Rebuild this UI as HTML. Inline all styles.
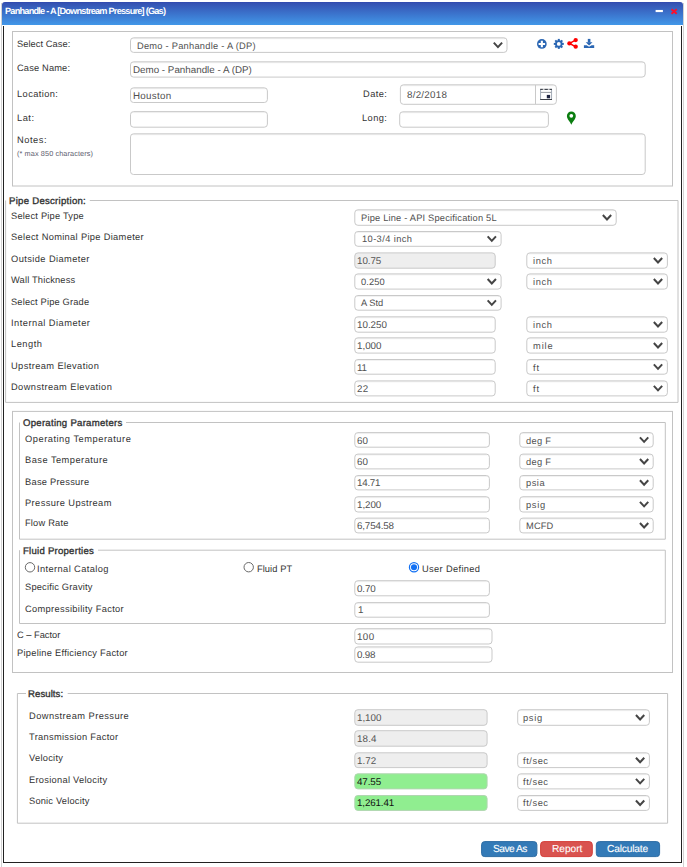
<!DOCTYPE html><html lang="en"><head><meta charset="utf-8"><title>Panhandle - A [Downstream Pressure] (Gas)</title><style>
html,body{margin:0;padding:0;background:#fff}
body{width:687px;height:867px;position:relative;overflow:hidden;font-family:'Liberation Sans', sans-serif;}
#r>div,#r>svg,#r>span{position:absolute;display:block;box-sizing:content-box}
#r>span{white-space:pre;line-height:14px;height:14px;transform:skewX(0.05deg);transform-origin:0 100%}
#r>span.lg{-webkit-text-stroke:0.35px #333}
#r>span.bt{-webkit-text-stroke:0.1px #fff}
</style></head><body><div id="r">
<svg style="left:0;top:0" width="687" height="867" viewBox="0 0 687 867">
<rect x="12.50" y="31.50" width="660.00" height="154.50" fill="none" stroke="#c2c2c2"/>
<rect x="130.50" y="37.80" width="376.50" height="14.60" rx="3.1" fill="#fff" stroke="#c9c9c9"/>
<path d="M132.50 38.80H505.00" stroke="#000" stroke-opacity=".05"/>
<path d="M493.80 42.60L497.95 47.09L502.10 42.60" fill="none" stroke="#454545" stroke-width="2.0"/>
<rect x="130.50" y="61.80" width="514.70" height="15.30" rx="3.1" fill="#fff" stroke="#c9c9c9"/>
<path d="M132.50 62.80H643.20" stroke="#000" stroke-opacity=".05"/>
<rect x="130.50" y="87.80" width="136.90" height="14.70" rx="3.1" fill="#fff" stroke="#c9c9c9"/>
<path d="M132.50 88.80H265.40" stroke="#000" stroke-opacity=".05"/>
<rect x="130.50" y="111.60" width="136.90" height="15.60" rx="3.1" fill="#fff" stroke="#c9c9c9"/>
<path d="M132.50 112.60H265.40" stroke="#000" stroke-opacity=".05"/>
<rect x="130.50" y="133.80" width="514.70" height="40.70" rx="3.1" fill="#fff" stroke="#c9c9c9"/>
<path d="M132.50 134.80H643.20" stroke="#000" stroke-opacity=".05"/>
<rect x="400.40" y="84.80" width="156.00" height="19.50" rx="3.1" fill="#fff" stroke="#c9c9c9"/>
<path d="M402.40 85.80H554.40" stroke="#000" stroke-opacity=".05"/>
<path d="M535.5 85V104" stroke="#c9c9c9"/>
<rect x="399.70" y="111.80" width="148.70" height="15.40" rx="3.1" fill="#fff" stroke="#c9c9c9"/>
<path d="M401.70 112.80H546.40" stroke="#000" stroke-opacity=".05"/>
<path d="M5.60 200.50H5.60V402.40H678.00V200.50H89.80" fill="none" stroke="#c2c2c2"/>
<rect x="354.80" y="209.80" width="261.40" height="15.50" rx="3.1" fill="#fff" stroke="#c9c9c9"/>
<path d="M356.80 210.80H614.20" stroke="#000" stroke-opacity=".05"/>
<path d="M602.85 215.05L607.00 219.54L611.15 215.05" fill="none" stroke="#454545" stroke-width="2.0"/>
<rect x="354.80" y="231.50" width="146.30" height="14.80" rx="3.1" fill="#fff" stroke="#c9c9c9"/>
<path d="M356.80 232.50H499.10" stroke="#000" stroke-opacity=".05"/>
<path d="M487.65 236.40L491.80 240.89L495.95 236.40" fill="none" stroke="#454545" stroke-width="2.0"/>
<rect x="354.80" y="252.90" width="140.40" height="15.30" rx="3.1" fill="#eeeeee" stroke="#c9c9c9"/>
<rect x="526.80" y="252.90" width="140.60" height="15.30" rx="3.1" fill="#fff" stroke="#c9c9c9"/>
<path d="M528.80 253.90H665.40" stroke="#000" stroke-opacity=".05"/>
<path d="M653.85 258.05L658.00 262.54L662.15 258.05" fill="none" stroke="#454545" stroke-width="2.0"/>
<rect x="354.80" y="273.90" width="146.30" height="15.20" rx="3.1" fill="#fff" stroke="#c9c9c9"/>
<path d="M356.80 274.90H499.10" stroke="#000" stroke-opacity=".05"/>
<path d="M487.65 279.00L491.80 283.49L495.95 279.00" fill="none" stroke="#454545" stroke-width="2.0"/>
<rect x="526.80" y="273.90" width="140.60" height="15.20" rx="3.1" fill="#fff" stroke="#c9c9c9"/>
<path d="M528.80 274.90H665.40" stroke="#000" stroke-opacity=".05"/>
<path d="M653.85 279.00L658.00 283.49L662.15 279.00" fill="none" stroke="#454545" stroke-width="2.0"/>
<rect x="354.80" y="295.50" width="146.30" height="14.70" rx="3.1" fill="#fff" stroke="#c9c9c9"/>
<path d="M356.80 296.50H499.10" stroke="#000" stroke-opacity=".05"/>
<path d="M487.65 300.35L491.80 304.84L495.95 300.35" fill="none" stroke="#454545" stroke-width="2.0"/>
<rect x="354.80" y="316.80" width="140.40" height="15.40" rx="3.1" fill="#fff" stroke="#c9c9c9"/>
<path d="M356.80 317.80H493.20" stroke="#000" stroke-opacity=".05"/>
<rect x="526.80" y="316.80" width="140.60" height="15.40" rx="3.1" fill="#fff" stroke="#c9c9c9"/>
<path d="M528.80 317.80H665.40" stroke="#000" stroke-opacity=".05"/>
<path d="M653.85 322.00L658.00 326.49L662.15 322.00" fill="none" stroke="#454545" stroke-width="2.0"/>
<rect x="354.80" y="337.80" width="140.40" height="15.30" rx="3.1" fill="#fff" stroke="#c9c9c9"/>
<path d="M356.80 338.80H493.20" stroke="#000" stroke-opacity=".05"/>
<rect x="526.80" y="337.80" width="140.60" height="15.30" rx="3.1" fill="#fff" stroke="#c9c9c9"/>
<path d="M528.80 338.80H665.40" stroke="#000" stroke-opacity=".05"/>
<path d="M653.85 342.95L658.00 347.44L662.15 342.95" fill="none" stroke="#454545" stroke-width="2.0"/>
<rect x="354.80" y="359.50" width="140.40" height="14.70" rx="3.1" fill="#fff" stroke="#c9c9c9"/>
<path d="M356.80 360.50H493.20" stroke="#000" stroke-opacity=".05"/>
<rect x="526.80" y="359.50" width="140.60" height="14.70" rx="3.1" fill="#fff" stroke="#c9c9c9"/>
<path d="M528.80 360.50H665.40" stroke="#000" stroke-opacity=".05"/>
<path d="M653.85 364.35L658.00 368.84L662.15 364.35" fill="none" stroke="#454545" stroke-width="2.0"/>
<rect x="354.80" y="380.90" width="140.40" height="15.00" rx="3.1" fill="#fff" stroke="#c9c9c9"/>
<path d="M356.80 381.90H493.20" stroke="#000" stroke-opacity=".05"/>
<rect x="526.80" y="380.90" width="140.60" height="15.00" rx="3.1" fill="#fff" stroke="#c9c9c9"/>
<path d="M528.80 381.90H665.40" stroke="#000" stroke-opacity=".05"/>
<path d="M653.85 385.90L658.00 390.39L662.15 385.90" fill="none" stroke="#454545" stroke-width="2.0"/>
<rect x="12.50" y="411.40" width="660.00" height="261.10" fill="none" stroke="#c2c2c2"/>
<path d="M19.50 422.50H19.50V539.20H665.30V422.50H126.00" fill="none" stroke="#c2c2c2"/>
<rect x="354.80" y="432.60" width="134.60" height="14.60" rx="3.1" fill="#fff" stroke="#c9c9c9"/>
<path d="M356.80 433.60H487.40" stroke="#000" stroke-opacity=".05"/>
<rect x="519.80" y="432.60" width="133.40" height="14.60" rx="3.1" fill="#fff" stroke="#c9c9c9"/>
<path d="M521.80 433.60H651.20" stroke="#000" stroke-opacity=".05"/>
<path d="M639.95 437.40L644.10 441.89L648.25 437.40" fill="none" stroke="#454545" stroke-width="2.0"/>
<rect x="354.80" y="454.10" width="134.60" height="14.80" rx="3.1" fill="#fff" stroke="#c9c9c9"/>
<path d="M356.80 455.10H487.40" stroke="#000" stroke-opacity=".05"/>
<rect x="519.80" y="454.10" width="133.40" height="14.80" rx="3.1" fill="#fff" stroke="#c9c9c9"/>
<path d="M521.80 455.10H651.20" stroke="#000" stroke-opacity=".05"/>
<path d="M639.95 459.00L644.10 463.49L648.25 459.00" fill="none" stroke="#454545" stroke-width="2.0"/>
<rect x="354.80" y="475.50" width="134.60" height="14.40" rx="3.1" fill="#fff" stroke="#c9c9c9"/>
<path d="M356.80 476.50H487.40" stroke="#000" stroke-opacity=".05"/>
<rect x="519.80" y="475.50" width="133.40" height="14.40" rx="3.1" fill="#fff" stroke="#c9c9c9"/>
<path d="M521.80 476.50H651.20" stroke="#000" stroke-opacity=".05"/>
<path d="M639.95 480.20L644.10 484.69L648.25 480.20" fill="none" stroke="#454545" stroke-width="2.0"/>
<rect x="354.80" y="496.70" width="134.60" height="15.30" rx="3.1" fill="#fff" stroke="#c9c9c9"/>
<path d="M356.80 497.70H487.40" stroke="#000" stroke-opacity=".05"/>
<rect x="519.80" y="496.70" width="133.40" height="15.30" rx="3.1" fill="#fff" stroke="#c9c9c9"/>
<path d="M521.80 497.70H651.20" stroke="#000" stroke-opacity=".05"/>
<path d="M639.95 501.85L644.10 506.34L648.25 501.85" fill="none" stroke="#454545" stroke-width="2.0"/>
<rect x="354.80" y="518.10" width="134.60" height="14.80" rx="3.1" fill="#fff" stroke="#c9c9c9"/>
<path d="M356.80 519.10H487.40" stroke="#000" stroke-opacity=".05"/>
<rect x="519.80" y="518.10" width="133.40" height="14.80" rx="3.1" fill="#fff" stroke="#c9c9c9"/>
<path d="M521.80 519.10H651.20" stroke="#000" stroke-opacity=".05"/>
<path d="M639.95 523.00L644.10 527.49L648.25 523.00" fill="none" stroke="#454545" stroke-width="2.0"/>
<path d="M19.50 550.20H19.50V623.50H665.30V550.20H98.00" fill="none" stroke="#c2c2c2"/>
<circle cx="30.0" cy="567.3" r="4.7" fill="#fff" stroke="#6a6a6a" stroke-width="1"/>
<circle cx="248.7" cy="567.2" r="4.7" fill="#fff" stroke="#6a6a6a" stroke-width="1"/>
<circle cx="414" cy="567.3" r="4.6" fill="#fff" stroke="#1270f3" stroke-width="1.2"/><circle cx="414" cy="567.3" r="3.05" fill="#1270f3"/>
<rect x="354.80" y="580.70" width="134.60" height="15.10" rx="3.1" fill="#fff" stroke="#c9c9c9"/>
<path d="M356.80 581.70H487.40" stroke="#000" stroke-opacity=".05"/>
<rect x="354.80" y="602.60" width="134.60" height="14.60" rx="3.1" fill="#fff" stroke="#c9c9c9"/>
<path d="M356.80 603.60H487.40" stroke="#000" stroke-opacity=".05"/>
<rect x="354.80" y="628.70" width="137.20" height="15.30" rx="3.1" fill="#fff" stroke="#c9c9c9"/>
<path d="M356.80 629.70H490.00" stroke="#000" stroke-opacity=".05"/>
<rect x="354.80" y="646.90" width="137.20" height="15.30" rx="3.1" fill="#fff" stroke="#c9c9c9"/>
<path d="M356.80 647.90H490.00" stroke="#000" stroke-opacity=".05"/>
<path d="M26.00 693.50H17.40V823.20H667.60V693.50H67.70" fill="none" stroke="#c2c2c2"/>
<rect x="354.80" y="709.70" width="132.30" height="15.60" rx="3.1" fill="#eeeeee" stroke="#c9c9c9"/>
<rect x="517.70" y="709.70" width="131.70" height="15.60" rx="3.1" fill="#fff" stroke="#c9c9c9"/>
<path d="M519.70 710.70H647.40" stroke="#000" stroke-opacity=".05"/>
<path d="M635.95 715.00L640.10 719.49L644.25 715.00" fill="none" stroke="#454545" stroke-width="2.0"/>
<rect x="354.80" y="730.70" width="132.30" height="15.50" rx="3.1" fill="#eeeeee" stroke="#c9c9c9"/>
<rect x="354.80" y="752.80" width="132.30" height="14.80" rx="3.1" fill="#eeeeee" stroke="#c9c9c9"/>
<rect x="517.70" y="752.80" width="131.70" height="14.80" rx="3.1" fill="#fff" stroke="#c9c9c9"/>
<path d="M519.70 753.80H647.40" stroke="#000" stroke-opacity=".05"/>
<path d="M635.95 757.70L640.10 762.19L644.25 757.70" fill="none" stroke="#454545" stroke-width="2.0"/>
<rect x="354.80" y="773.80" width="132.30" height="15.10" rx="3.1" fill="#90ee90" stroke="#b0d6b0"/>
<rect x="517.70" y="773.80" width="131.70" height="15.10" rx="3.1" fill="#fff" stroke="#c9c9c9"/>
<path d="M519.70 774.80H647.40" stroke="#000" stroke-opacity=".05"/>
<path d="M635.95 778.85L640.10 783.34L644.25 778.85" fill="none" stroke="#454545" stroke-width="2.0"/>
<rect x="354.80" y="795.50" width="132.30" height="14.90" rx="3.1" fill="#90ee90" stroke="#b0d6b0"/>
<rect x="517.70" y="795.50" width="131.70" height="14.90" rx="3.1" fill="#fff" stroke="#c9c9c9"/>
<path d="M519.70 796.50H647.40" stroke="#000" stroke-opacity=".05"/>
<path d="M635.95 800.45L640.10 804.94L644.25 800.45" fill="none" stroke="#454545" stroke-width="2.0"/>
<rect x="481.60" y="841.6" width="55.30" height="15" rx="3.2" fill="#337ab7" stroke="#2e6da4"/>
<rect x="540.60" y="841.6" width="51.70" height="15" rx="3.2" fill="#d9534f" stroke="#d43f3a"/>
<rect x="596.30" y="841.6" width="63.30" height="15" rx="3.2" fill="#337ab7" stroke="#2e6da4"/>
</svg>
<div style="left:1px;top:3px;width:1px;height:870px;background:#d2d2d2"></div>
<div style="left:683px;top:3px;width:1px;height:870px;background:#d2d2d2"></div>
<div style="left:2px;top:2px;width:681px;height:23px;border-radius:3px 3px 0 0;background:linear-gradient(#3048ae 0,#3553b3 7%,#4297e8 100%)"></div>
<div style="left:3px;top:26px;width:677px;height:836px;border:1px solid #222;border-top:none"></div>
<svg style="left:650px;top:5px" width="32" height="14" viewBox="650 5 32 14"><rect x="655.6" y="9.95" width="7.3" height="2.15" fill="#fff"/><path d="M671.5 9.2L676.7 13.7M676.7 9.2L671.5 13.7" stroke="#fb0f2c" stroke-width="1.9" fill="none"/></svg>
<svg style="left:536px;top:38px" width="12" height="12" viewBox="0 0 12 12"><circle cx="5.85" cy="5.95" r="4.85" fill="#2a66b3"/><path d="M5.85 2.7V9.2M2.6 5.95H9.1" stroke="#fff" stroke-width="2.1"/></svg>
<svg style="left:553px;top:38px" width="12" height="12" viewBox="0 0 12 12"><g fill="#2a66b3" transform="translate(-0.2 -0.1)"><circle cx="6" cy="6" r="3.7"/><rect x="5" y="1" width="2" height="10"/><rect x="5" y="1" width="2" height="10" transform="rotate(45 6 6)"/><rect x="5" y="1" width="2" height="10" transform="rotate(90 6 6)"/><rect x="5" y="1" width="2" height="10" transform="rotate(135 6 6)"/><circle cx="6" cy="6" r="1.9" fill="#fff"/></g></svg>
<svg style="left:566px;top:37px" width="13" height="13" viewBox="0 0 13 13"><path d="M9.4 3.2 L3.6 6.4 L9.4 9.6" stroke="#f00" stroke-width="1.5" fill="none"/><circle cx="9.7" cy="3.1" r="2.15" fill="#f00"/><circle cx="3.4" cy="6.4" r="2.15" fill="#f00"/><circle cx="9.7" cy="9.7" r="2.15" fill="#f00"/></svg>
<svg style="left:583px;top:38px" width="12" height="11" viewBox="0 0 12 11"><g fill="#2a66b3"><rect x="4.8" y="0.9" width="2.6" height="3.6"/><path d="M2.7 4.2 H9.5 L6.1 7.5Z"/><path d="M0.9 7.3 H3.6 L6.1 8.7 L8.6 7.3 H11.2 V10.1 H0.9Z"/></g></svg>
<svg style="left:540px;top:88px" width="13" height="13" viewBox="0 0 13 13"><rect x="0.6" y="1.3" width="11" height="10.2" fill="#fff" stroke="#9aa3b0" stroke-width="0.9"/><path d="M0.2 1.4H12" stroke="#3c4048" stroke-width="1.1"/><path d="M0.2 11.5H12" stroke="#3c4048" stroke-width="1"/><path d="M1 4.4H11.2" stroke="#8a8f96" stroke-width="0.9"/><rect x="2.8" y="0.5" width="1.8" height="1.2" fill="#fff"/><rect x="7.8" y="0.5" width="1.8" height="1.2" fill="#fff"/><rect x="6.8" y="6.9" width="3.3" height="3.4" fill="#1d2340"/></svg>
<svg style="left:566px;top:111px" width="11" height="14" viewBox="0 0 11 14"><path d="M5.35 13.7 C4.3 10.6 0.9 8.2 0.9 4.9 A4.45 4.5 0 0 1 9.8 4.9 C9.8 8.2 6.4 10.6 5.35 13.7Z" fill="#0b7d10"/><circle cx="5.3" cy="4.8" r="1.85" fill="#fff"/></svg>
<span style="left:4.90px;top:4px;font-size:9.2px;color:#fff;letter-spacing:-0.783px;font-weight:700">Panhandle - A [Downstream Pressure] (Gas)</span>
<span style="left:17.30px;top:37px;font-size:9.3px;color:#333;letter-spacing:0.059px">Select Case:</span>
<span style="left:17.30px;top:61px;font-size:9.3px;color:#333;letter-spacing:0.151px">Case Name:</span>
<span style="left:17.30px;top:87px;font-size:9.3px;color:#333;letter-spacing:0.394px">Location:</span>
<span style="left:17.40px;top:111px;font-size:9.3px;color:#333;letter-spacing:0.493px">Lat:</span>
<span style="left:17.40px;top:133px;font-size:9.3px;color:#333;letter-spacing:0.536px">Notes:</span>
<span style="left:17.40px;top:147px;font-size:7.3px;color:#5c5c6e;letter-spacing:0.103px">(* max 850 characters)</span>
<span style="left:136.50px;top:39px;font-size:9.3px;color:#505050;letter-spacing:0.243px">Demo - Panhandle - A (DP)</span>
<span style="left:133.20px;top:63px;font-size:9.8px;color:#505050;letter-spacing:0.003px">Demo - Panhandle - A (DP)</span>
<span style="left:133.30px;top:89px;font-size:9.8px;color:#505050;letter-spacing:0.284px">Houston</span>
<span style="left:363.20px;top:87px;font-size:9.3px;color:#333;letter-spacing:0.418px">Date:</span>
<span style="left:362.40px;top:111px;font-size:9.3px;color:#333;letter-spacing:0.418px">Long:</span>
<span style="left:406.50px;top:88px;font-size:9.8px;color:#505050;letter-spacing:0.248px">8/2/2018</span>
<span class="lg" style="left:9.30px;top:194px;font-size:9.6px;color:#333;letter-spacing:0.267px">Pipe Description:</span>
<span style="left:11.00px;top:209px;font-size:9.3px;color:#333;letter-spacing:0.211px">Select Pipe Type</span>
<span style="left:11.00px;top:230px;font-size:9.3px;color:#333;letter-spacing:0.319px">Select Nominal Pipe Diameter</span>
<span style="left:11.00px;top:252px;font-size:9.3px;color:#333;letter-spacing:0.409px">Outside Diameter</span>
<span style="left:11.00px;top:273px;font-size:9.3px;color:#333;letter-spacing:0.166px">Wall Thickness</span>
<span style="left:11.00px;top:295px;font-size:9.3px;color:#333;letter-spacing:0.167px">Select Pipe Grade</span>
<span style="left:11.00px;top:316px;font-size:9.3px;color:#333;letter-spacing:0.476px">Internal Diameter</span>
<span style="left:11.00px;top:337px;font-size:9.3px;color:#333;letter-spacing:0.488px">Length</span>
<span style="left:11.00px;top:359px;font-size:9.3px;color:#333;letter-spacing:0.394px">Upstream Elevation</span>
<span style="left:11.00px;top:380px;font-size:9.3px;color:#333;letter-spacing:0.410px">Downstream Elevation</span>
<span style="left:360.90px;top:211px;font-size:9.3px;color:#505050;letter-spacing:0.189px">Pipe Line - API Specification 5L</span>
<span style="left:361.70px;top:232px;font-size:9.3px;color:#505050;letter-spacing:0.397px">10-3/4 inch</span>
<span style="left:357.40px;top:254px;font-size:9.8px;color:#555;letter-spacing:-0.066px">10.75</span>
<span style="left:532.50px;top:254px;font-size:9.3px;color:#505050;letter-spacing:0.597px">inch</span>
<span style="left:360.90px;top:275px;font-size:9.3px;color:#505050;letter-spacing:0.109px">0.250</span>
<span style="left:532.50px;top:275px;font-size:9.3px;color:#505050;letter-spacing:0.597px">inch</span>
<span style="left:360.90px;top:296px;font-size:9.3px;color:#505050;letter-spacing:-0.020px">A Std</span>
<span style="left:357.40px;top:318px;font-size:9.8px;color:#505050;letter-spacing:-0.006px">10.250</span>
<span style="left:532.50px;top:318px;font-size:9.3px;color:#505050;letter-spacing:0.597px">inch</span>
<span style="left:357.40px;top:339px;font-size:9.8px;color:#505050;letter-spacing:-0.014px">1,000</span>
<span style="left:532.50px;top:339px;font-size:9.3px;color:#505050;letter-spacing:0.894px">mile</span>
<span style="left:357.40px;top:361px;font-size:9.8px;color:#505050;letter-spacing:-0.108px">11</span>
<span style="left:532.50px;top:361px;font-size:9.3px;color:#505050;letter-spacing:0.836px">ft</span>
<span style="left:357.40px;top:382px;font-size:9.8px;color:#505050;letter-spacing:0.214px">22</span>
<span style="left:532.50px;top:382px;font-size:9.3px;color:#505050;letter-spacing:0.836px">ft</span>
<span class="lg" style="left:22.70px;top:416px;font-size:9.6px;color:#333;letter-spacing:0.260px">Operating Parameters</span>
<span style="left:24.70px;top:432px;font-size:9.3px;color:#333;letter-spacing:0.520px">Operating Temperature</span>
<span style="left:357.40px;top:434px;font-size:9.8px;color:#505050;letter-spacing:0.063px">60</span>
<span style="left:525.50px;top:434px;font-size:9.3px;color:#505050;letter-spacing:0.309px">deg F</span>
<span style="left:24.70px;top:453px;font-size:9.3px;color:#333;letter-spacing:0.457px">Base Temperature</span>
<span style="left:357.40px;top:455px;font-size:9.8px;color:#505050;letter-spacing:0.063px">60</span>
<span style="left:525.50px;top:455px;font-size:9.3px;color:#505050;letter-spacing:0.309px">deg F</span>
<span style="left:24.70px;top:475px;font-size:9.3px;color:#333;letter-spacing:0.257px">Base Pressure</span>
<span style="left:357.40px;top:476px;font-size:9.8px;color:#505050;letter-spacing:-0.248px">14.71</span>
<span style="left:525.50px;top:476px;font-size:9.3px;color:#505050;letter-spacing:0.512px">psia</span>
<span style="left:24.70px;top:496px;font-size:9.3px;color:#333;letter-spacing:0.395px">Pressure Upstream</span>
<span style="left:357.40px;top:498px;font-size:9.8px;color:#505050;letter-spacing:-0.064px">1,200</span>
<span style="left:525.50px;top:498px;font-size:9.3px;color:#505050;letter-spacing:0.678px">psig</span>
<span style="left:24.70px;top:516px;font-size:9.3px;color:#333;letter-spacing:0.189px">Flow Rate</span>
<span style="left:357.40px;top:519px;font-size:9.8px;color:#505050;letter-spacing:-0.163px">6,754.58</span>
<span style="left:525.50px;top:519px;font-size:9.3px;color:#505050;letter-spacing:0.153px">MCFD</span>
<span class="lg" style="left:22.70px;top:544px;font-size:9.6px;color:#333;letter-spacing:0.240px">Fluid Properties</span>
<span style="left:37.20px;top:562px;font-size:9.3px;color:#333;letter-spacing:0.389px">Internal Catalog</span>
<span style="left:257.45px;top:562px;font-size:9.3px;color:#333;letter-spacing:0.066px">Fluid PT</span>
<span style="left:422.00px;top:562px;font-size:9.3px;color:#333;letter-spacing:0.342px">User Defined</span>
<span style="left:24.70px;top:580px;font-size:9.3px;color:#333;letter-spacing:0.190px">Specific Gravity</span>
<span style="left:24.70px;top:602px;font-size:9.3px;color:#333;letter-spacing:0.320px">Compressibility Factor</span>
<span style="left:357.40px;top:582px;font-size:9.8px;color:#505050;letter-spacing:-0.142px">0.70</span>
<span style="left:357.80px;top:603px;font-size:9.8px;color:#505050;letter-spacing:0.000px">1</span>
<span style="left:17.20px;top:628px;font-size:9.3px;color:#333;letter-spacing:-0.009px">C – Factor</span>
<span style="left:17.20px;top:646px;font-size:9.3px;color:#333;letter-spacing:0.260px">Pipeline Efficiency Factor</span>
<span style="left:357.40px;top:630px;font-size:9.8px;color:#505050;letter-spacing:0.372px">100</span>
<span style="left:357.40px;top:648px;font-size:9.8px;color:#505050;letter-spacing:-0.224px">0.98</span>
<span class="lg" style="left:27.95px;top:687px;font-size:9.6px;color:#333;letter-spacing:0.063px">Results:</span>
<span style="left:28.95px;top:709px;font-size:9.3px;color:#333;letter-spacing:0.431px">Downstream Pressure</span>
<span style="left:357.40px;top:711px;font-size:9.8px;color:#555;letter-spacing:-0.045px">1,100</span>
<span style="left:523.40px;top:711px;font-size:9.3px;color:#505050;letter-spacing:0.678px">psig</span>
<span style="left:28.95px;top:730px;font-size:9.3px;color:#333;letter-spacing:0.296px">Transmission Factor</span>
<span style="left:357.40px;top:732px;font-size:9.8px;color:#555;letter-spacing:0.133px">18.4</span>
<span style="left:28.95px;top:751px;font-size:9.3px;color:#333;letter-spacing:0.262px">Velocity</span>
<span style="left:357.40px;top:754px;font-size:9.8px;color:#555;letter-spacing:0.077px">1.72</span>
<span style="left:523.40px;top:754px;font-size:9.3px;color:#505050;letter-spacing:0.562px">ft/sec</span>
<span style="left:28.95px;top:773px;font-size:9.3px;color:#333;letter-spacing:0.277px">Erosional Velocity</span>
<span style="left:357.10px;top:775px;font-size:9.8px;color:#111;letter-spacing:-0.088px">47.55</span>
<span style="left:523.40px;top:775px;font-size:9.3px;color:#505050;letter-spacing:0.562px">ft/sec</span>
<span style="left:28.95px;top:794px;font-size:9.3px;color:#333;letter-spacing:0.189px">Sonic Velocity</span>
<span style="left:357.10px;top:796px;font-size:9.8px;color:#111;letter-spacing:-0.134px">1,261.41</span>
<span style="left:523.40px;top:796px;font-size:9.3px;color:#505050;letter-spacing:0.562px">ft/sec</span>
<span class="bt" style="left:492.50px;top:842px;font-size:10.2px;color:#fff;letter-spacing:-0.494px">Save As</span>
<span class="bt" style="left:551.70px;top:842px;font-size:10.2px;color:#fff;letter-spacing:-0.048px">Report</span>
<span class="bt" style="left:606.90px;top:842px;font-size:10.2px;color:#fff;letter-spacing:-0.166px">Calculate</span>
</div></body></html>
